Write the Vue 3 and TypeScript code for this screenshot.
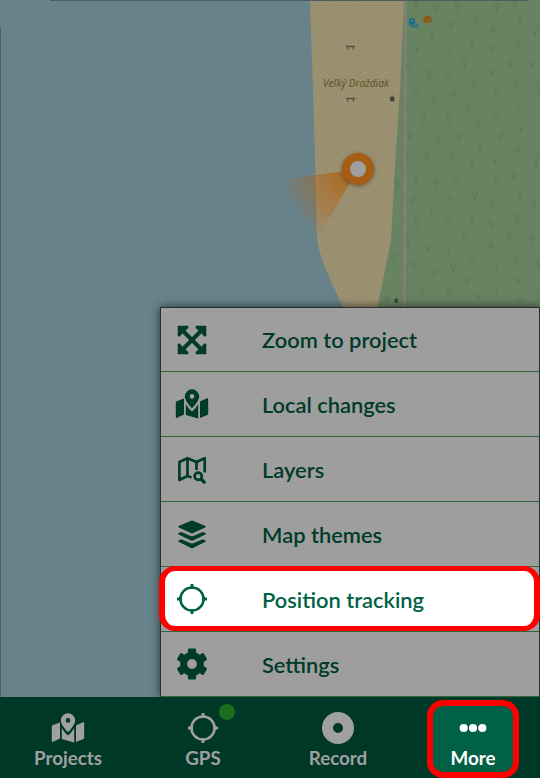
<script setup lang="ts">
interface Item { id: string; label: string; active?: boolean }

const menu: Item[] = [
  { id: 'zoom', label: 'Zoom to project' },
  { id: 'marker', label: 'Local changes' },
  { id: 'layers', label: 'Layers' },
  { id: 'themes', label: 'Map themes' },
  { id: 'target', label: 'Position tracking', active: true },
  { id: 'gear', label: 'Settings' },
]

const tabs: Item[] = [
  { id: 'marker', label: 'Projects' },
  { id: 'target', label: 'GPS' },
  { id: 'record', label: 'Record' },
  { id: 'dots', label: 'More', active: true },
]

const trees: [number, number][] = [
  [416, 4], [436, 8], [457, 5], [497, 6], [515, 1], [520, 18], [476, 20], [451, 23], [493, 29], [535, 31],
  [432, 34], [472, 42], [518, 43], [417, 47], [449, 49], [492, 48], [465, 62], [510, 62], [532, 63], [409, 66],
  [429, 73], [449, 74], [492, 71], [474, 84], [516, 84], [415, 90], [454, 93], [497, 91], [539, 88], [434, 99],
  [519, 105], [468, 106], [406, 109], [497, 114], [423, 117], [449, 117], [478, 122], [521, 127], [410, 134],
  [459, 135], [501, 134], [438, 138], [480, 147], [518, 149], [406, 156], [427, 155], [452, 156], [495, 159],
  [472, 164], [536, 160], [514, 174], [416, 177], [457, 178], [436, 181], [497, 179], [397, 182], [475, 194],
  [520, 192], [413, 198], [450, 197], [492, 202], [534, 204], [431, 208], [417, 221], [472, 216], [517, 217],
  [448, 222], [491, 222], [465, 236], [509, 236], [532, 237], [408, 240], [428, 247], [449, 248], [491, 245],
  [473, 258], [516, 258], [394, 257], [414, 264], [453, 266], [497, 264], [539, 262], [434, 272], [467, 280],
  [518, 279], [406, 283], [422, 290], [449, 291], [497, 288], [478, 295], [520, 300], [387, 298], [539, 291],
]
</script>

<template>
  <svg class="defs" width="0" height="0" aria-hidden="true">
    <symbol id="zoom" viewBox="0 0 34 34">
      <path d="M7.5 7.5 26.5 26.5M26.5 7.5 7.5 26.5" fill="none" stroke="currentColor" stroke-width="4" />
      <path d="M3.4 2.7h9.2q.8 0 .8.8v1.200q0 .5-.6.7L10.200 7.700 7.700 10.200 5.400 12.800q-.2.600-.7.600H3.500q-.8 0-.8-.8V3.500q0-.8.7-.8z" fill="currentColor" />
      <path d="M30.600 2.700h-9.200q-.8 0-.8.8v1.200q0 .5.600.7L23.800 7.700 26.300 10.200 28.600 12.800q.2.600.7.600h1.200q.8 0 .8-.8V3.500q0-.8-.7-.8z" fill="currentColor" />
      <path d="M3.400 31.300h9.200q.8 0 .8-.8v-1.200q0-.5-.6-.7L10.200 26.300 7.700 23.800 5.400 21.200q-.2-.6-.7-.6H3.500q-.8 0-.8.8v9.100q0 .8.700.8z" fill="currentColor" />
      <path d="M30.600 31.300h-9.200q-.8 0-.8-.8v-1.200q0-.5.600-.7l2.600-2.300 2.500-2.500 2.300-2.600q.2-.6.700-.6h1.200q.8 0 .8.800v9.100q0 .8-.7.800z" fill="currentColor" />
    </symbol>
    <symbol id="marker" viewBox="0 0 34 34">
      <g fill="currentColor">
        <path fill-rule="evenodd" d="M17 2.300a7.200 7.200 0 0 0-7.200 7.200c0 3.500 4 8.300 6.500 11.100q.7.700 1.400 0C20.200 17.800 24.200 13 24.200 9.500a7.200 7.200 0 0 0-7.200-7.200zm0 4.700a2.400 2.400 0 1 1 0 4.800 2.400 2.400 0 0 1 0-4.800z" />
        <path d="M.8 15.500q0-.9.800-1.200l7.400-2.800v16.100l-7 3.200Q.8 31.300.8 30.100z" />
        <path d="M10.800 17.200q2.300 3.600 5.200 6.600 1 .9 2 0 2.900-3 5.200-6.600v14.300l-12.400-3.500z" />
        <path d="M25 14.600 32 11.300q1.200-.5 1.200.7v14.800q0 .8-.8 1.200L25 31.100z" />
      </g>
    </symbol>
    <symbol id="layers" viewBox="0 0 34 34">
      <g fill="none" stroke="currentColor" stroke-width="2.700" stroke-linejoin="round">
        <path d="M16.500 25.400 12.500 24 4.400 28V10L12.500 6.200 21.500 10 29.700 6.200V20.500" />
        <path d="M12.500 6.500V24M21.500 10V18" />
        <circle cx="23.200" cy="24.200" r="3.600" />
        <path d="M26 27 30.200 31.200" stroke-width="3.200" />
      </g>
    </symbol>
    <symbol id="themes" viewBox="0 0 34 34">
      <g fill="currentColor">
        <path d="M16 3.800q1-.4 2 0l12.300 5.200q1.200.7 0 1.400L18 16q-1 .4-2 0L3.700 10.400q-1.200-.7 0-1.400z" />
        <path d="m6.400 14.900 8.500 3.800q2.100.9 4.200 0l8.500-3.800 2.800 1.200q1 .7 0 1.400L18 23.500q-1 .4-2 0L3.600 17.500q-1-.7 0-1.400z" />
        <path d="m6.400 22.200 8.500 3.800q2.100.9 4.200 0l8.500-3.800 2.800 1.200q1 .7 0 1.400L18 31q-1 .4-2 0L3.600 24.800q-1-.7 0-1.400z" />
      </g>
    </symbol>
    <symbol id="target" viewBox="0 0 34 34">
      <g fill="none" stroke="currentColor" stroke-width="2.500">
        <circle cx="17" cy="17" r="11.600" />
        <path d="M17 2V7M17 27V32M2 17H7M27 17H32" stroke-width="2.900" />
      </g>
    </symbol>
    <symbol id="gear" viewBox="0 0 34 34">
      <path fill="currentColor" fill-rule="evenodd" d="M13.700 1.500h6.600q.7 0 .8.800v3.500q1.900.7 3.500 2l3-1.700q.7-.3 1.100.2l3.300 5.600q.3.700-.3 1.100L28.700 14.900q.3 2.100 0 4.200l3 1.900q.6.400.3 1.100l-3.300 5.600q-.4.500-1.100.2l-3-1.700q-1.600 1.300-3.500 2v3.500q-.1.800-.8.800h-6.600q-.7 0-.8-.8v-3.500q-1.900-.7-3.500-2l-3 1.700q-.7.300-1.100-.2L2 22.100q-.3-.7.300-1.100l3-1.900q-.3-2.100 0-4.200l-3-1.900q-.6-.4-.3-1.100l3.300-5.600q.4-.5 1.100-.2l3 1.700q1.600-1.300 3.500-2V2.300q.1-.8.800-.8zM17 12.100a4.900 4.900 0 1 0 0 9.800 4.900 4.900 0 0 0 0-9.800z" />
    </symbol>
    <symbol id="record" viewBox="0 0 34 34">
      <circle cx="17" cy="17" r="10.500" fill="none" stroke="currentColor" stroke-width="11" />
    </symbol>
    <symbol id="dots" viewBox="0 0 34 34">
      <g fill="currentColor"><circle cx="7.700" cy="17" r="4.100" /><circle cx="17" cy="17" r="4.100" /><circle cx="26.300" cy="17" r="4.100" /></g>
    </symbol>
  </svg>

  <div class="screen">
    <svg class="map" viewBox="0 0 540 697">
      <defs>
        <pattern id="sand" width="11" height="10" patternUnits="userSpaceOnUse">
          <rect width="11" height="10" fill="#9b9171" />
          <path d="M1 1.500h1M5 .5h1M8 2.500h1M3 4.500h1M6 5.500h1M10 5.500h1M1 7.500h1M4 8.500h1M8 8.500h1" stroke="#8f8669" stroke-width="1" />
        </pattern>
        <radialGradient id="beam" gradientUnits="userSpaceOnUse" cx="358" cy="169" r="79">
          <stop offset="0.200" stop-color="#b0600f" stop-opacity="0.750" />
          <stop offset="1" stop-color="#b0600f" stop-opacity="0" />
        </radialGradient>
        <filter id="soft" x="-30%" y="-30%" width="160%" height="160%"><feGaussianBlur stdDeviation="2" /></filter>
      </defs>
      <rect width="540" height="697" fill="#68828a" />
      <path d="M404 0H540V310H376L391 240 397 130z" fill="#678361" />
      <path d="M310 0H404L400 90 396 150 391 240 377 310H344L326 270Q318 250 317 238L314 120z" fill="url(#sand)" />
      <g fill="none" stroke="#597653" stroke-width="0.800">
        <g v-for="([x, y], i) in trees" :key="i">
          <circle :cx="x" :cy="y" r="2.300" /><path :d="`M${x} ${y + 1.5}v5`" />
        </g>
      </g>
      <path d="M405.500 0 404.500 310" stroke="#7d887b" stroke-width="2.600" />
      <path d="M405.500 0 404.500 310" stroke="#936d68" stroke-width="1.400" stroke-dasharray="1.500 1.500" />
      <text x="323" y="87" textLength="66" lengthAdjust="spacingAndGlyphs" class="place">Veľký Draždiak</text>
      <g fill="none" stroke="#54524b" stroke-width="1.300">
        <path d="M346 46.500h9M347.700 47v2.600M353.300 47v2.600M346 98.500h9M347.700 99v2.600M353.300 99v2.600" />
      </g>
      <g fill="#42443e">
        <path d="M390 97h4.500v3l-.8 1.500h-2.800L390 100zM391.300 95.800h2v1h-2z" />
        <path d="M394.500 298.500h3.500v3l-.8 1.500h-2l-.7-1.500z" />
      </g>
      <g fill="none" stroke="#146f91">
        <path d="M409.900 25.500V19.200h2.300a1.900 1.900 0 0 1 0 3.800H410" stroke-width="1.900" />
        <circle cx="412.500" cy="26" r="1.300" /><circle cx="416.300" cy="26" r="1.300" /><path d="M412.500 25.500 414 23h2l.5 2.500" stroke-width="0.800" />
      </g>
      <path d="M423.300 18.800q.2-2.800 4.200-2.800t4.200 2.800zM423.300 21.300h8.400q0 1.500-1.500 1.500h-5.400q-1.500 0-1.500-1.500z" fill="#93510d" />
      <path d="M423 20h9" stroke="#7f5b13" stroke-width="1.600" />
      <path d="M358 169 281 180 317 239z" fill="url(#beam)" />
      <circle cx="358" cy="170" r="16" fill="#3a3525" opacity="0.600" filter="url(#soft)" />
      <circle cx="358" cy="169" r="12" fill="#a0a0a0" stroke="#a55e14" stroke-width="8" />
      <path d="M50 .5H529M.5 28V697" fill="none" stroke="#4c5d63" />
    </svg>

    <nav class="menu">
      <button v-for="item in menu" :key="item.id" class="row" :class="{ active: item.active }">
        <svg class="icon"><use :href="`#${item.id}`" /></svg>
        <span class="label">{{ item.label }}</span>
      </button>
    </nav>

    <footer class="bar">
      <button v-for="tab in tabs" :key="tab.label" class="tab" :class="{ active: tab.active }">
        <span class="glyph">
          <svg class="icon"><use :href="`#${tab.id}`" /></svg>
          <i v-if="tab.label === 'GPS'" class="status"></i>
        </span>
        <span class="caption">{{ tab.label }}</span>
      </button>
    </footer>
  </div>
</template>

<style>
body { margin: 0; overflow: hidden; }
</style>

<style scoped>
.defs { position: absolute; }
.screen {
  width: 540px;
  height: 778px;
  display: grid;
  grid-template: 697px 81px / 540px;
  overflow: hidden;
  font-family: Lato, "Open Sans", sans-serif;
}
button { border: 0; margin: 0; padding: 0; background: none; font: inherit; color: inherit; }
.map { grid-area: 1 / 1; width: 540px; height: 697px; display: block; }
.place { font: italic 11.2px "Noto Sans", sans-serif; fill: #5d5525; }
.menu {
  grid-area: 1 / 1;
  align-self: end;
  justify-self: end;
  box-sizing: border-box;
  width: 380px;
  height: 390px;
  display: grid;
  grid-template-rows: 64px repeat(5, 65px);
  border: solid #292e2d;
  border-width: 1px 1px 0;
  background: #9e9e9e;
  box-shadow: 0 0 9px rgba(0, 0, 0, 0.65);
  color: #003b29;
}
.row {
  box-sizing: border-box;
  display: flex;
  align-items: center;
  gap: 53px;
  padding-left: 14px;
  border-bottom: 1px solid #31653a;
  font-size: 21.85px;
  font-weight: 600;
  line-height: 28px;
  white-space: nowrap;
}
.label { padding-top: 2px; }
.row:first-child .label { padding-top: 0; }
.icon { display: block; width: 34px; height: 34px; flex: none; }
.row.active { position: relative; z-index: 0; color: #006146; }
.row.active::before {
  content: "";
  position: absolute;
  z-index: -1;
  inset: -1px -1px 0 -2px;
  border: solid #fe0000;
  border-width: 5px 6px;
  border-radius: 16px;
  background: #fff;
}
.bar { display: grid; grid-template-columns: repeat(4, 135px); background: #003828; color: #a0a0a0; z-index: 1; }
.tab {
  box-sizing: border-box;
  height: 81px;
  display: flex;
  flex-direction: column;
  align-items: center;
  padding-top: 14px;
}
.glyph { position: relative; }
.caption { padding-left: 1px; font-size: 18.8px; font-weight: 700; line-height: 26px; }
.status { position: absolute; left: 33.5px; top: -7px; width: 16px; height: 16px; border-radius: 50%; background: #1c6e1f; }
.tab.active {
  justify-self: center;
  width: 92px;
  height: 78px;
  margin-top: 3px;
  padding-top: 5px;
  border: 6px solid #fe0000;
  border-radius: 16px;
  background: #006146;
  color: #fff;
}
</style>
